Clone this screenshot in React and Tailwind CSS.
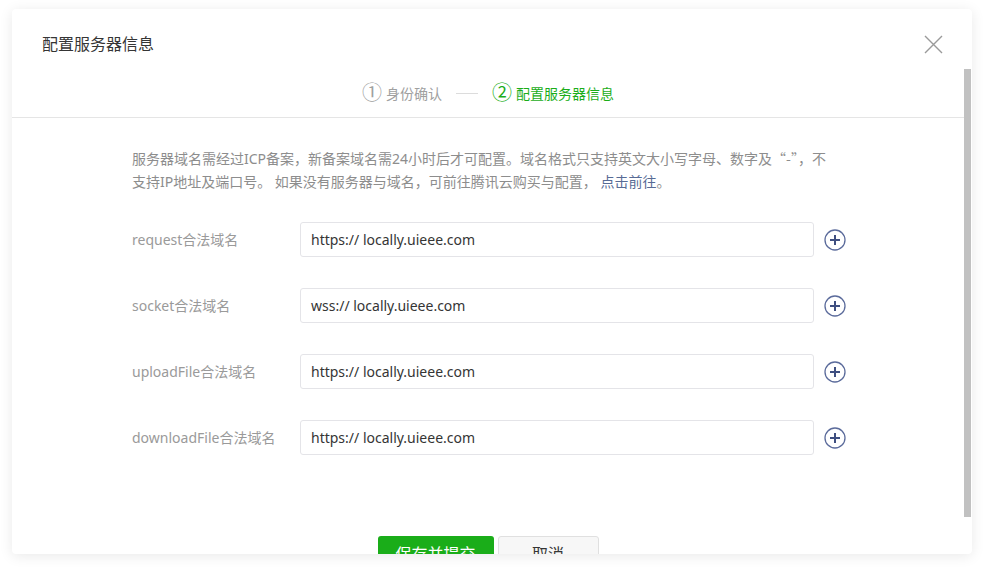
const font = { fontFamily: '"Noto Sans", "Noto Sans CJK SC", sans-serif' };

const domains = [
  { label: "request合法域名", value: "https:// locally.uieee.com" },
  { label: "socket合法域名", value: "wss:// locally.uieee.com" },
  { label: "uploadFile合法域名", value: "https:// locally.uieee.com" },
  { label: "downloadFile合法域名", value: "https:// locally.uieee.com" },
];

const PlusCircle = () => (
  <svg width="22" height="22" viewBox="0 0 22 22" fill="none">
    <circle cx="11" cy="11" r="10" stroke="#5b6b9b" strokeWidth="1.3" />
    <path d="M11 6v10M6 11h10" stroke="#3f4f80" strokeWidth="2" />
  </svg>
);

const App = () => {
  return (
    <div className="w-[995px] h-[578px] bg-white pt-[9px] pl-[12px] overflow-hidden" style={font}>
      <div className="relative w-[960px] h-[545px] bg-white rounded-[4px] shadow-[0_2px_14px_rgba(0,0,0,0.09)] flex flex-col overflow-hidden">
        {/* header */}
        <div className="h-[60px] shrink-0 flex items-center justify-between pt-[10px] pl-[30px] pr-[29px]">
          <h2 className="text-[16px] text-[#353535]">配置服务器信息</h2>
          <svg width="19" height="19" viewBox="0 0 19 19" fill="none">
            <path d="M1 1l17 17M18 1L1 18" stroke="#9a9a9a" strokeWidth="1.4" />
          </svg>
        </div>

        <div className="flex flex-1 min-h-0">
          <div className="flex-1 min-w-0 overflow-hidden">
            {/* steps */}
            <div className="h-[49px] border-b border-[#e5e5e5] flex items-center justify-center">
              <div className="flex items-center text-[#a0a0a0]">
                <span className="text-[20px] leading-none">①</span>
                <span className="text-[14px] ml-[4px]">身份确认</span>
              </div>
              <div className="w-[22px] h-px bg-[#dcdcdc] mx-[14px]" />
              <div className="flex items-center text-[#1aad19]">
                <span className="text-[20px] leading-none">②</span>
                <span className="text-[14px] ml-[4px]">配置服务器信息</span>
              </div>
            </div>

            {/* body */}
            <div className="pl-[120px] pt-[29px]">
              <p className="w-[730px] text-[14px] leading-[23px] text-[#8d8d8d]">
                服务器域名需经过ICP备案，新备案域名需24小时后才可配置。域名格式只支持英文大小写字母、数字及
                <span style={{ fontFamily: '"Noto Sans CJK SC", sans-serif' }}>“-”</span>，不
                <br />
                支持IP地址及端口号。 如果没有服务器与域名，可前往腾讯云购买与配置，{" "}
                <span className="text-[#576b95]">点击前往</span>。
              </p>

              <div className="mt-[29px] flex flex-col gap-[31px]">
                {domains.map((d, i) => (
                  <div key={i} className="flex items-center">
                    <div className="w-[168px] text-[14px] text-[#9a9a9a]">{d.label}</div>
                    <div className="w-[514px] h-[35px] border border-[#e4e4e8] rounded-[3px] flex items-center px-[10px] text-[14px] text-[#353535]">
                      {d.value}
                    </div>
                    <div className="ml-[10px] flex">
                      <PlusCircle />
                    </div>
                  </div>
                ))}
              </div>

              <div className="mt-[81px] flex justify-center gap-[4px] pr-[120px]">
                <button className="w-[116px] h-[36px] rounded-[3px] bg-[#1aad19] text-white text-[16px]">保存并提交</button>
                <button className="w-[101px] h-[36px] rounded-[3px] bg-[#f7f7f7] border border-[#e0e0e0] text-[#353535] text-[16px]">取消</button>
              </div>
            </div>
          </div>

          {/* scrollbar */}
          <div className="w-[7px] mr-[1px] shrink-0">
            <div className="h-[448px] bg-[#c1c1c1]" />
          </div>
        </div>
      </div>
    </div>
  );
};

export default App;
